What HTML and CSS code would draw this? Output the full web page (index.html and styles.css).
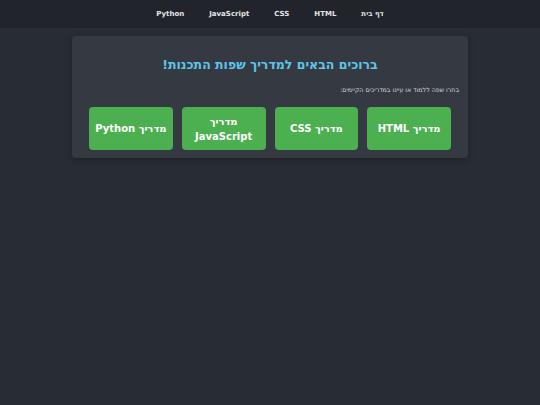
FILE: index.html
```html
<!DOCTYPE html>
<html lang="he" dir="rtl">
<head>
<meta charset="utf-8">
<title>מדריך שפות התכנות</title>
<link rel="stylesheet" href="styles.css">
</head>
<body>
<header class="topbar">
  <nav class="nav">
    <a class="nav-link" href="#">דף בית</a>
    <a class="nav-link" href="#">HTML</a>
    <a class="nav-link" href="#">CSS</a>
    <a class="nav-link" href="#">JavaScript</a>
    <a class="nav-link" href="#">Python</a>
  </nav>
</header>
<main class="main">
  <section class="card">
    <h1 class="title">ברוכים הבאים למדריך שפות התכנות!</h1>
    <p class="subtitle">בחרו שפה ללמוד או עיינו במדריכים הקיימים:</p>
    <div class="buttons">
      <a class="btn" href="#">מדריך HTML</a>
      <a class="btn" href="#">מדריך CSS</a>
      <a class="btn" href="#">מדריך JavaScript</a>
      <a class="btn" href="#">מדריך Python</a>
    </div>
  </section>
</main>
</body>
</html>
```
FILE: styles.css
```css
* { box-sizing: border-box; }
html, body { margin: 0; padding: 0; }
body {
  background: #282c34;
  color: #dcdcdc;
  font-family: "DejaVu Sans", Verdana, sans-serif;
  min-height: 405px;
}
.topbar {
  background: #21252b;
  height: 28px;
  display: flex;
  align-items: center;
  justify-content: center;
}
.nav {
  display: flex;
  gap: 25px;
  align-items: center;
}
.nav-link {
  color: #e6e6e6;
  text-decoration: none;
  font-size: 7px;
  font-weight: bold;
}
.main {
  display: flex;
  justify-content: center;
  padding-top: 8px;
}
.card {
  width: 396px;
  background: #353a42;
  border-radius: 4px;
  padding: 20px 17px 8px;
  box-shadow: 0 2px 6px rgba(0,0,0,0.25);
}
.title {
  margin: 0;
  text-align: center;
  color: #5ec5ec;
  font-size: 12.5px;
  font-weight: bold;
  line-height: 18px;
}
.subtitle {
  margin: 11px -8px 0 0;
  font-size: 6.25px;
  color: #d4d4d4;
  line-height: 9px;
}
.buttons {
  margin-top: 13px;
  display: grid;
  grid-template-columns: repeat(4, 1fr);
  gap: 9px;
}
.btn {
  background: #4caf50;
  color: #fff;
  text-decoration: none;
  border-radius: 4px;
  height: 43px;
  display: flex;
  align-items: center;
  justify-content: center;
  text-align: center;
  font-size: 10px;
  font-weight: bold;
  line-height: 15px;
  padding: 0 4px;
}
```
